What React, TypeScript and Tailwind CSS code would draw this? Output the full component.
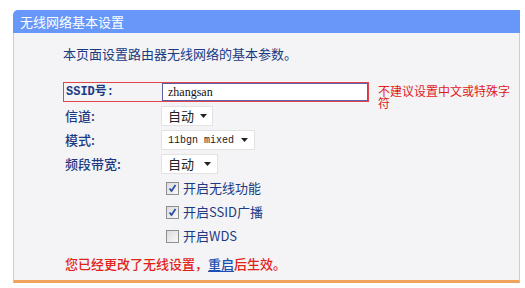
import React from 'react';

const FONT = '"Noto Sans CJK SC", "DejaVu Sans", sans-serif';

const Arrow = () => (
  <svg width="9" height="6" viewBox="0 0 9 6" className="shrink-0">
    <path d="M1 1h7L4.5 5z" fill="#222" />
  </svg>
);

const Select = ({ value, width, mono }: { value: string; width: string; mono?: boolean }) => (
  <div
    className={`flex h-[20px] items-center justify-between gap-[5px] whitespace-nowrap bg-white border border-[#e2e2e2] pl-[6px] pr-[5px] ${width}`}
  >
    <span
      className={mono ? 'text-[10px] text-[#222]' : 'text-[13px] text-[#222]'}
      style={mono ? { fontFamily: '"Liberation Mono", monospace' } : undefined}
    >
      {value}
    </span>
    <Arrow />
  </div>
);

const Checkbox = ({ checked, label }: { checked: boolean; label: string }) => (
  <div className="flex h-[24px] items-center gap-[4px] pl-[3px]">
    <div className="flex h-[13px] w-[13px] items-center justify-center border border-[#8e8f8f] bg-gradient-to-br from-[#dcdcdc] to-[#f8f8f8]">
      {checked && (
        <svg width="9" height="9" viewBox="0 0 9 9">
          <path d="M1.5 4.5l2 2.5 4-6" fill="none" stroke="#2b4fa8" strokeWidth="1.8" />
        </svg>
      )}
    </div>
    <span className="text-[13px] text-[#1c3a82]">{label}</span>
  </div>
);

const Row = ({ label, children }: { label: string; children: React.ReactNode }) => (
  <div className="flex h-[24px] items-center">
    <div className="w-[98px] pl-[2px] text-[13px] font-medium text-[#1c3a82]">{label}</div>
    {children}
  </div>
);

export default function App() {
  return (
    <div className="h-[288px] w-[525px] bg-white pl-[13px] pt-[10px]" style={{ fontFamily: FONT }}>
      <div className="w-[507px]">
        <div className="flex h-[23px] items-center rounded-tl-[5px] bg-[#6797f8] pl-[7px] text-[13px] text-white">
          无线网络基本设置
        </div>
        <div className="h-[250px] border-x border-b-[3px] border-x-[#f3c98a] border-b-[#f0a35c] bg-[#f4f4f6] pl-[49px] pt-[13px]">
          <div className="h-[34px] text-[13px] leading-[16px] text-[#1c3a82]">本页面设置路由器无线网络的基本参数。</div>

          <div className="flex h-[24px] items-center">
            <div className="flex h-[20px] w-[306px] items-center border border-[#e0454c]">
              <div
                className="w-[98px] pl-[2px] text-[12px] font-bold text-[#1c3a82]"
                style={{ fontFamily: '"Liberation Mono", "Noto Sans CJK SC", monospace' }}
              >
                SSID号:
              </div>
              <div
                className="flex h-[18px] flex-1 items-center border border-[#5f5fa8] bg-white pl-[5px] text-[12px] text-[#111]"
                style={{ fontFamily: '"Liberation Serif", serif' }}
              >
                zhangsan
              </div>
            </div>
            <div className="ml-[9px] mt-[10px] w-[136px] text-[12px] leading-[12px] text-[#e0201c]">不建议设置中文或特殊字符</div>
          </div>

          <Row label="信道:">
            <Select value="自动" width="w-[52px]" />
          </Row>
          <Row label="模式:">
            <Select value="11bgn mixed" width="w-[94px]" mono />
          </Row>
          <Row label="频段带宽:">
            <Select value="自动" width="w-[57px]" />
          </Row>

          <div className="pl-[100px]">
            <Checkbox checked label="开启无线功能" />
            <Checkbox checked label="开启SSID广播" />
            <Checkbox checked={false} label="开启WDS" />
          </div>

          <div className="mt-[4px] flex h-[24px] items-center pl-[2px] text-[13px] font-medium text-[#e2231a]">
            您已经更改了无线设置，<span className="text-[#1c4fb0] underline underline-offset-2">重启</span>后生效。
          </div>
        </div>
      </div>
    </div>
  );
}
